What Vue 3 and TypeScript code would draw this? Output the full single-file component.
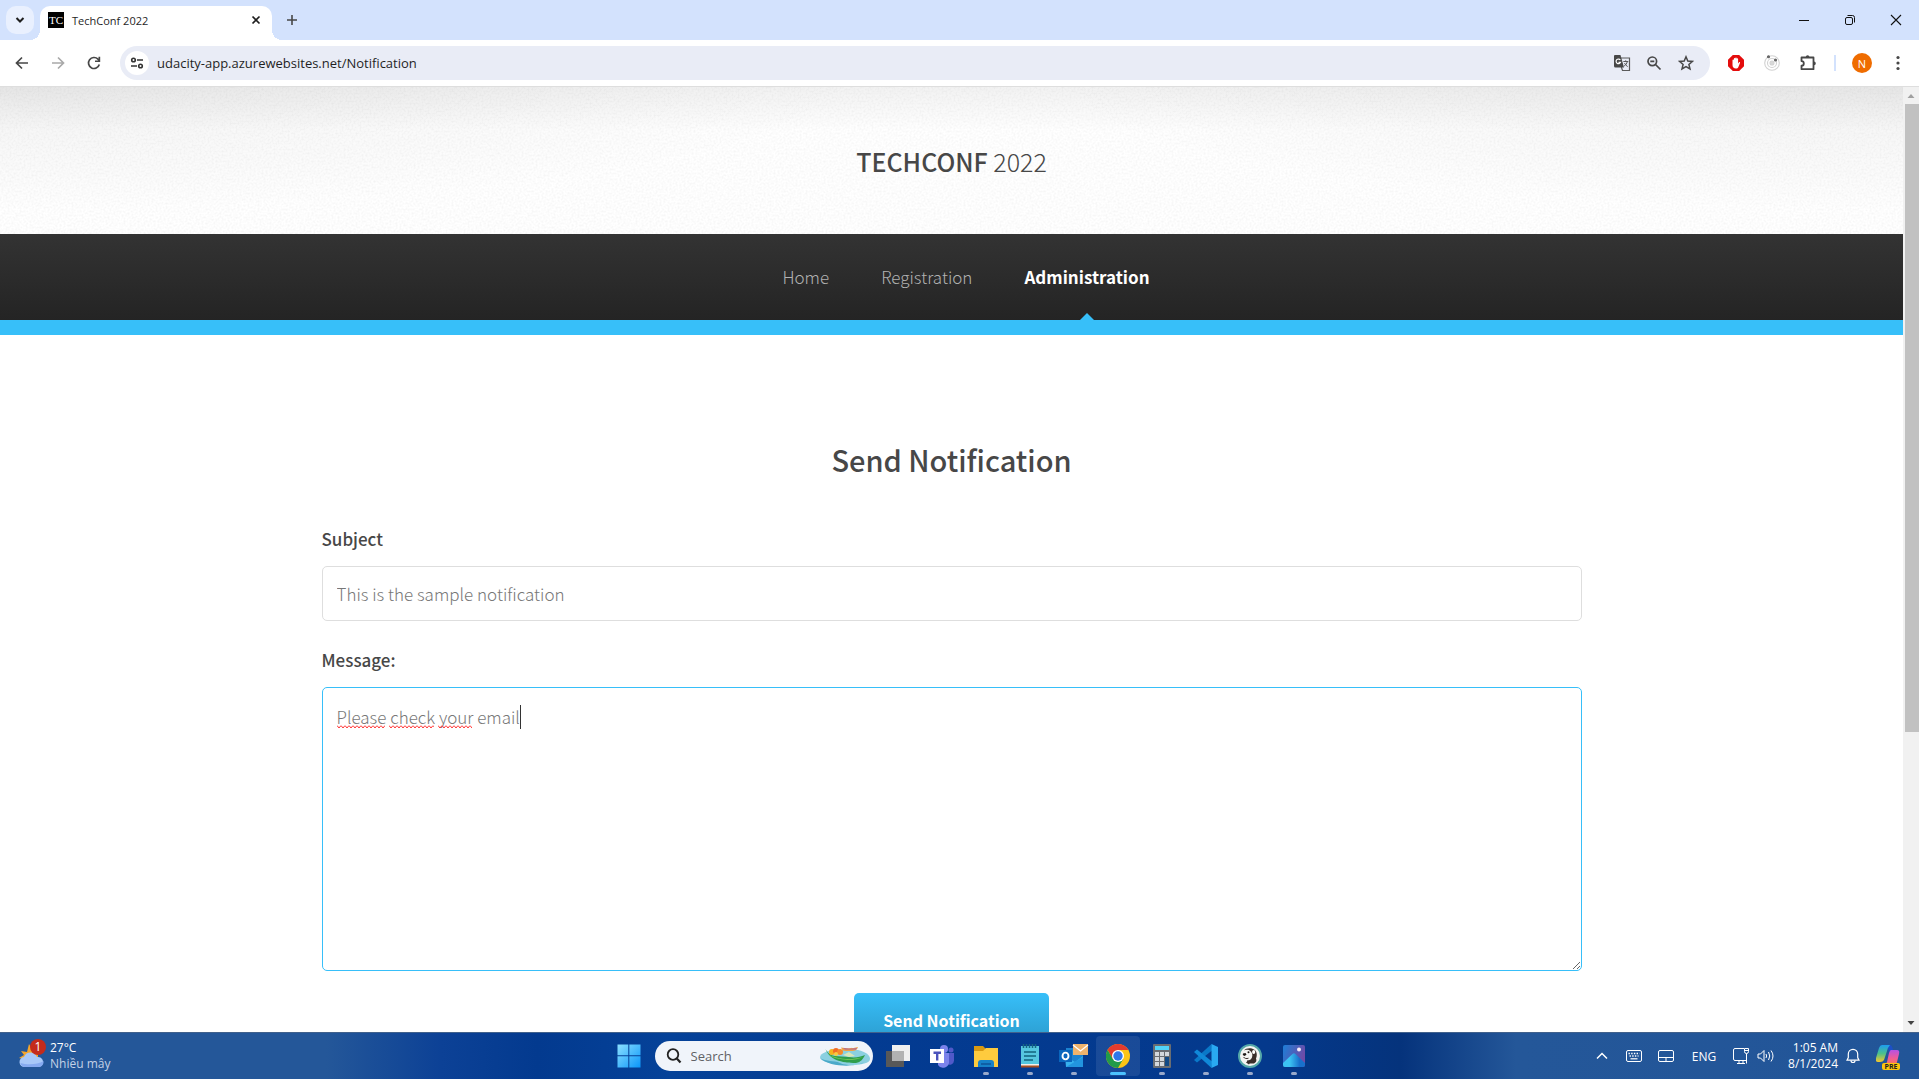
<script setup lang="ts">
import { ref } from 'vue'

interface NavItem {
  label: string
  active: boolean
}

const navItems: NavItem[] = [
  { label: 'Home', active: false },
  { label: 'Registration', active: false },
  { label: 'Administration', active: true },
]

const address = ref('udacity-app.azurewebsites.net/Notification')
const subject = ref('This is the sample notification')
const message = ref('Please check your email')
const search = ref('')

// Widths of the words that the spelling check underlines
const squiggles: number[] = [48, 45, 34]
</script>

<template>
  <div class="desktop">
    <header class="tabstrip">
      <button class="tab-search" aria-label="Search tabs">
        <svg width="10" height="10" viewBox="0 0 10 10"><path d="M1.5 3 5 6.500 8.500 3" fill="none" stroke="#1f1f1f" stroke-width="2" /></svg>
      </button>
      <div class="tab">
        <span class="favicon">TC</span>
        <span class="tab-title">TechConf 2022</span>
        <button class="plain tab-close" aria-label="Close tab">
          <svg width="10" height="10" viewBox="0 0 10 10"><path d="M1.500 1.500 8.500 8.500M8.500 1.500 1.500 8.500" stroke="#1f1f1f" stroke-width="1.700" /></svg>
        </button>
      </div>
      <button class="plain new-tab" aria-label="New tab">
        <svg width="12" height="12" viewBox="0 0 12 12"><path d="M6 1v10M1 6h10" stroke="#474747" stroke-width="1.600" /></svg>
      </button>
      <div class="window-buttons">
        <button class="plain" aria-label="Minimize">
          <svg width="12" height="12" viewBox="0 0 12 12"><path d="M1 6.500h10" stroke="#111" /></svg>
        </button>
        <button class="plain" aria-label="Restore">
          <svg width="12" height="12" viewBox="0 0 12 12" fill="none" stroke="#111"><rect x="1.500" y="3.500" width="7" height="7" rx="1.500" /><path d="M3.500 1.500H8.500a2 2 0 0 1 2 2V8.500" /></svg>
        </button>
        <button class="plain" aria-label="Close">
          <svg width="12" height="12" viewBox="0 0 12 12"><path d="M1 1 11 11M11 1 1 11" stroke="#111" stroke-width="1.100" /></svg>
        </button>
      </div>
    </header>

    <div class="toolbar">
      <button class="plain nav-button" aria-label="Back">
        <svg width="16" height="16" viewBox="0 0 16 16" fill="none" stroke="#474747" stroke-width="1.700"><path d="M14 8H3M8 2.500 2.500 8 8 13.500" /></svg>
      </button>
      <button class="plain nav-button" aria-label="Forward">
        <svg width="16" height="16" viewBox="0 0 16 16" fill="none" stroke="#a9a9a9" stroke-width="1.700"><path d="M2 8h11M8 2.500 13.500 8 8 13.500" /></svg>
      </button>
      <button class="plain nav-button" aria-label="Reload">
        <svg width="16" height="16" viewBox="0 0 16 16"><path d="M13.300 9.500A5.500 5.500 0 1 1 12 4.200L13.500 5.800" fill="none" stroke="#474747" stroke-width="1.700" /><path d="M14.200 1.800V7H9V5.400h3.500V1.800z" fill="#474747" /></svg>
      </button>
      <div class="omnibox">
        <button class="site-info" aria-label="Site information">
          <svg width="14" height="14" viewBox="0 0 14 14" fill="none" stroke="#333" stroke-width="1.600"><circle cx="3.500" cy="4" r="1.800" /><path d="M7 4h6M1 10h6" /><circle cx="10.500" cy="10" r="1.800" /></svg>
        </button>
        <input v-model="address" class="address" type="text" aria-label="Address" spellcheck="false" />
        <button class="plain omni-icon" aria-label="Translate">
          <svg width="18" height="18" viewBox="0 0 18 18"><path d="M8 4h8.500v12.500H9.500L8.300 13" fill="#e9ecf6" stroke="#5a5a5a" stroke-width="1.200" /><path d="M2 1H7.500L11 13.500H2.500A1.500 1.500 0 0 1 1 12V2a1 1 0 0 1 1-1z" fill="#474747" /><path d="M7.300 6A2.300 2.300 0 1 0 7.500 8.300H5.500" fill="none" stroke="#fff" stroke-width="1.200" /><path d="M10.300 7.500h5M12.700 6.300v1.200M14.300 7.500c-.5 2.200-1.500 3.500-3.200 4.500M11.500 9c.7 1.600 1.700 2.800 3.200 3.600" fill="none" stroke="#5a5a5a" /></svg>
        </button>
        <button class="plain omni-icon" aria-label="Zoom">
          <svg width="16" height="16" viewBox="0 0 16 16" fill="none" stroke="#474747" stroke-width="1.700"><circle cx="6.300" cy="6.300" r="4.300" /><path d="M9.500 9.500 14.500 14.500M4.300 6.300h4" /></svg>
        </button>
        <button class="plain omni-icon" aria-label="Bookmark">
          <svg width="16" height="16" viewBox="0 0 16 16"><path d="M8 1.800 9.800 6l4.600.4-3.500 3 1.100 4.500L8 11.500l-4 2.400 1.100-4.500-3.500-3L6.200 6z" fill="none" stroke="#474747" stroke-width="1.500" /></svg>
        </button>
      </div>
      <button class="plain ext" aria-label="Ad blocker">
        <svg width="16" height="16" viewBox="0 0 16 16"><path d="M4.800 0h6.400L16 4.800v6.400L11.200 16H4.800L0 11.200V4.800z" fill="#e40d0d" /><path d="M4.500 8.500V5.300a.7.7 0 0 1 1.400 0V3.800a.7.7 0 0 1 1.400 0V3.100a.7.7 0 0 1 1.400 0v.8a.7.7 0 0 1 1.400 0V8.600l.8-1.200c.5-.6 1.400-.2 1.100.5l-1.600 4c-.5 1.100-1.200 1.600-2.600 1.600-2 0-3.300-1.400-3.300-3.500z" fill="#fff" /></svg>
      </button>
      <button class="plain ext" aria-label="Extension">
        <svg width="16" height="16" viewBox="0 0 16 16" fill="none" stroke="#d2d2d2" stroke-width="1.100"><circle cx="8" cy="8" r="7.300" /><circle cx="8" cy="8" r="4.500" /><circle cx="8" cy="8" r="2" fill="#d8d8d8" /><circle cx="4.500" cy="1.800" r="1" fill="#666" stroke="#666" /><circle cx="11.500" cy="5" r="1" fill="#666" stroke="#666" /></svg>
      </button>
      <button class="plain ext" aria-label="Extensions">
        <svg width="18" height="18" viewBox="0 0 18 18"><path d="M2.500 3.500h12v11.700h-12v-3.500a2.300 2.300 0 0 0 0-4.600z" fill="none" stroke="#474747" stroke-width="1.800" stroke-linejoin="round" /><path d="M6.800 3a1.800 1.800 0 0 1 3.600 0zM15 7.600a1.800 1.800 0 0 1 0 3.600z" fill="#474747" /></svg>
      </button>
      <span class="divider"></span>
      <button class="avatar" aria-label="Profile">N</button>
      <button class="plain menu" aria-label="Menu">
        <svg width="4" height="16" viewBox="0 0 4 16" fill="#474747"><circle cx="2" cy="2.500" r="1.600" /><circle cx="2" cy="8" r="1.600" /><circle cx="2" cy="13.500" r="1.600" /></svg>
      </button>
    </div>

    <div class="viewport">
      <div class="page">
        <div class="banner">
          <svg class="grain" width="100%" height="100%" aria-hidden="true">
            <filter id="paper" x="0" y="0" width="100%" height="100%">
              <feTurbulence type="fractalNoise" baseFrequency="0.5" numOctaves="2" />
              <feColorMatrix values="0 0 0 0 0  0 0 0 0 0  0 0 0 0 0  0.08 0 0 0 -0.03" />
            </filter>
            <rect width="100%" height="100%" filter="url(#paper)" />
          </svg>
          <h1 class="logo"><strong>TECHCONF</strong> 2022</h1>
        </div>
        <nav class="site-nav">
          <a v-for="item in navItems" :key="item.label" href="#" :class="{ active: item.active }">{{ item.label }}</a>
        </nav>
        <main class="content">
          <h2>Send Notification</h2>
          <form @submit.prevent>
            <label for="subject">Subject</label>
            <input id="subject" v-model="subject" type="text" />
            <label for="message">Message:</label>
            <div class="message-box">
              <textarea id="message" v-model="message"></textarea>
              <div class="marks" aria-hidden="true">
                <svg v-for="(w, i) in squiggles" :key="i" :width="w" height="4">
                  <pattern :id="'wave' + i" width="4" height="4" patternUnits="userSpaceOnUse">
                    <path d="M0 .5 2 3 4 .5" fill="none" stroke="#f33" stroke-width="1" />
                  </pattern>
                  <rect width="100%" height="4" :fill="`url(#wave${i})`" />
                </svg>
                <span class="caret"></span>
              </div>
            </div>
            <button class="submit" type="submit">Send Notification</button>
          </form>
        </main>
      </div>
      <div class="scrollbar" aria-hidden="true">
        <svg width="8" height="17" viewBox="0 0 8 17"><path d="M.5 11 4 7l3.500 4z" fill="#a0a0a0" /></svg>
        <span class="track"><span class="thumb"></span></span>
        <svg width="8" height="18" viewBox="0 0 8 18"><path d="M.5 7 4 11l3.500-4z" fill="#444" /></svg>
      </div>
    </div>

    <footer class="taskbar">
      <div class="weather">
        <span class="weather-icon">
          <svg width="26" height="26" viewBox="0 0 26 26">
            <path d="M0 15l5-3-3-4 6 1 2-8 3 5 6-2v12H5z" fill="#f5a52a" />
            <path d="M6 24a5 5 0 0 1-1-10 7 7 0 0 1 13 0 5 5 0 0 1 2 10z" fill="#a8c8f8" />
            <path d="M6 24a5 5 0 0 1-4.500-4c6 2 17 2 23-2a5 5 0 0 1-4.500 6z" fill="#86aaf0" />
          </svg>
          <span class="badge">1</span>
        </span>
        <span class="weather-text"><span>27°C</span><span class="dim">Nhiều mây</span></span>
      </div>

      <div class="apps">
        <button class="app" aria-label="Start">
          <svg width="24" height="24" viewBox="0 0 24 24">
            <defs><linearGradient id="win" x1="0" y1="0" x2="1" y2="1"><stop offset="0" stop-color="#8be0ff" /><stop offset="1" stop-color="#0a96fa" /></linearGradient></defs>
            <path d="M.5.500H11.300V11.300H.5zM12.300.500H23.500V11.300H12.300zM.5 12.300H11.300V23.500H.5zM12.300 12.300H23.500V23.500H12.300z" fill="url(#win)" />
          </svg>
        </button>
        <label class="search">
          <svg width="16" height="16" viewBox="0 0 16 16" fill="none" stroke="#222" stroke-width="1.800"><circle cx="7" cy="6.500" r="5.300" /><path d="M10.800 10.500 14.500 14.500" stroke-width="2.200" /></svg>
          <input v-model="search" type="text" placeholder="Search" />
          <svg width="50" height="20" viewBox="0 0 50 20">
            <path d="M0 11c1-4 7-6 14-7h24c8 2 12 5 12 9 0 4-8 6-22 6S0 16 0 11z" fill="#8bd0e0" />
            <path d="M0 12c6 4 14 2 20 5s20 3 24-1c-6 5-34 6-44-4z" fill="#4ba9c9" />
            <path d="M21 1.500c5 1 12 1 17-.5-1 3-3 4-6 4h-6c-3 0-4-1-5-3.500z" fill="#f0a040" />
            <path d="M23 2c5 1 10 1 14 0l-1 1.500H25z" fill="#a65fae" />
            <path d="M5 1c1 4 4 8 10 9l14 1c6 1 11 0 16-2-2 4-4 7-9 8-14 0-28-3-31-16z" fill="#2f9e4c" />
            <path d="M8 8c8 5 22 7 35 3-4 2-9 3-15 3C20 13 12 12 8 8z" fill="#7ed058" />
            <circle cx="12" cy="6" r="3" fill="#f5b21e" /><circle cx="16" cy="5" r="3" fill="#f06c28" /><circle cx="20" cy="6" r="3" fill="#f58a2a" /><circle cx="16" cy="8" r="2" fill="#f7cb3d" />
            <path d="M23 9l6-3 6 4-6 1z" fill="#d8e6b8" />
          </svg>
        </label>
        <button class="app" aria-label="Task view">
          <svg width="24" height="22" viewBox="0 0 24 22"><path d="M0 6h18v16H0z" fill="#585858" /><path d="M6 0h18v16H6z" fill="#efefef" /><path d="M6 6h12v10H6z" fill="#b2b2b2" /></svg>
        </button>
        <button class="app" aria-label="Teams">
          <svg width="24" height="24" viewBox="0 0 24 24"><circle cx="14" cy="5" r="4" fill="#7b83eb" /><circle cx="21" cy="6" r="2.500" fill="#5059c9" /><path d="M16 9h8v7a4.500 4.500 0 0 1-7 4z" fill="#5059c9" /><path d="M8 9h11v8a6 6 0 0 1-11 4z" fill="#7b83eb" /><path d="M0 5h14v14H0z" fill="#fff" /><path d="M3.500 8.800h7.500M7.200 8.500v8" stroke="#4b53bc" stroke-width="2.400" /></svg>
        </button>
        <button class="app running" aria-label="File Explorer">
          <svg width="24" height="24" viewBox="0 0 24 24"><path d="M0 2h9l3 3H24V10H0z" fill="#d99a12" /><path d="M0 7h9l3-3H24V23H0z" fill="#fecb3e" /><path d="M4 23v-4a3 3 0 0 1 3-3H17a3 3 0 0 1 3 3v4z" fill="#1681c9" /><path d="M7 19h10v2H7z" fill="#0f5fa5" /></svg>
        </button>
        <button class="app running" aria-label="Notepad">
          <svg width="20" height="24" viewBox="0 0 20 24"><path d="M1 20h18v3.500H1z" fill="#a84d20" /><path d="M1 19h18v2.500H1z" fill="#f3eee8" /><path d="M1 2h18v18H1z" fill="#55c6df" /><path d="M4 8h12M4 12h12M4 16h9" stroke="#12637e" stroke-width="1.500" /><path d="M3.500 0v4M6.500 0v4M9.500 0v4M12.500 0v4M15.500 0v4" stroke="#176581" stroke-width="1.500" /></svg>
        </button>
        <button class="app running" aria-label="Outlook">
          <svg width="30" height="24" viewBox="0 0 30 24"><path d="M7 4h17v18H7z" fill="#1b82d0" /><path d="M6 12l10 6 8-6v11H7z" fill="#36b1ed" /><path d="M7 23 24 13v10z" fill="#2295df" /><path d="M0 6h13v12H0z" fill="#0a66bd" /><ellipse cx="6.500" cy="12" rx="3" ry="3.400" fill="none" stroke="#fff" stroke-width="1.900" /><path d="M14 0h15v11H14z" fill="#efb36c" /><path d="M14 1l7.500 6L29 1" fill="none" stroke="#fff" stroke-width="1.300" /></svg>
        </button>
        <button class="app running current" aria-label="Chrome">
          <svg width="24" height="24" viewBox="0 0 24 24"><circle cx="12" cy="12" r="12" fill="#fbc516" /><path d="M12 6H22.400A12 12 0 0 0 1.600 6L6.800 15z" fill="#e33b2e" /><path d="M1.600 6a12 12 0 0 0 10.400 18L17.200 15H6.800z" fill="#229b49" /><circle cx="12" cy="12" r="6" fill="#fff" /><circle cx="12" cy="12" r="4.700" fill="#2f78ea" /></svg>
        </button>
        <button class="app running" aria-label="Calculator">
          <svg width="18" height="24" viewBox="0 0 18 24"><rect width="18" height="24" rx="1" fill="#6a6d72" /><path d="M2 2h14v4H2z" fill="#51d4fa" /><path d="M2 8h4v4H2zM7 8h4v4H7zM12 8h4v4h-4zM2 13h4v4H2zM7 13h4v4H7zM2 18h4v4H2zM7 18h4v4H7z" fill="#d4d8dc" /><path d="M12 13h4v9h-4z" fill="#124a86" /></svg>
        </button>
        <button class="app running" aria-label="Visual Studio Code">
          <svg width="24" height="24" viewBox="0 0 24 24"><path d="M17.500 0 18 6.500 3 18.500 0 16z" fill="#0a78c8" /><path d="M17.500 24 18 17.500 3 5.500 0 8z" fill="#1088d8" /><path d="M17.500 0 24 3V21l-6.500 3z" fill="#29a9f2" /></svg>
        </button>
        <button class="app running" aria-label="DBeaver">
          <svg width="24" height="24" viewBox="0 0 24 24"><circle cx="12" cy="12" r="11" fill="#f4f4f2" stroke="#54a7a8" stroke-width="2" /><path d="M6 6.500C8 4 13 3.500 16 5.500c3 1.500 3.500 6 2 9 1 2 0 4-2 5h-5c-1-1-2-2-2-3 3 0 4-1 5-3 1-3 0-6-3-7.500C9 5.300 7 6 6 6.500z" fill="#3a2e2a" /><path d="M8 18.500l2-2 2 2-1 2z" fill="#3a2e2a" /><ellipse cx="15.700" cy="8" rx="1.600" ry="2" fill="#fff" /><path d="M5 9.500 7.500 9l1 1.800-2 1.200-1.700-1z" fill="#1c1715" /><circle cx="10.500" cy="8.300" r="1" fill="#1c1715" /><path d="M5.500 13c1 1.500 3 2 5 1.200" fill="none" stroke="#3a2e2a" /></svg>
        </button>
        <button class="app running" aria-label="Photos">
          <svg width="22" height="22" viewBox="0 0 22 22">
            <defs>
              <linearGradient id="sky" x1="0" y1="0" x2="1" y2="0.4"><stop offset="0" stop-color="#1c7fd8" /><stop offset="1" stop-color="#6f4aa6" /></linearGradient>
              <linearGradient id="hill" x1="0" y1="1" x2="1" y2="1"><stop offset=".3" stop-color="#3cc4f2" /><stop offset=".75" stop-color="#1870cc" /></linearGradient>
            </defs>
            <rect width="22" height="22" rx="2" fill="url(#sky)" /><path d="M0 18 9.500 9q1.500-1.500 3 0L22 18v2a2 2 0 0 1-2 2H2a2 2 0 0 1-2-2z" fill="url(#hill)" /><circle cx="16" cy="4.500" r="2" fill="#f4eaf8" />
          </svg>
        </button>
      </div>

      <div class="tray">
        <button class="tray-icon" aria-label="Show hidden icons">
          <svg width="12" height="8" viewBox="0 0 12 8"><path d="M1 6.500 6 1.500l5 5" fill="none" stroke="#fff" stroke-width="1.500" /></svg>
        </button>
        <button class="tray-icon" aria-label="Touch keyboard">
          <svg width="16" height="12" viewBox="0 0 16 12"><rect x=".5" y=".5" width="15" height="11" rx="1.500" fill="none" stroke="#fff" /><path d="M2.500 3.500h11M3.500 6h9" stroke="#fff" stroke-width="1.400" stroke-dasharray="1.400 1.300" /><path d="M4.500 8.800h7" stroke="#fff" stroke-width="1.200" /></svg>
        </button>
        <button class="tray-icon" aria-label="Touchpad">
          <svg width="16" height="12" viewBox="0 0 16 12"><path d="M.5 7.500h15M8 7.500v4" stroke="#fff" /><rect x=".5" y=".5" width="15" height="11" rx="1.500" fill="none" stroke="#fff" /></svg>
        </button>
        <button class="tray-icon lang">ENG</button>
        <button class="tray-icon status" aria-label="Network and volume">
          <svg width="17" height="18" viewBox="0 0 17 18" fill="none" stroke="#fff"><path d="M11 1.500H2A1.500 1.500 0 0 0 .5 3v9A1.500 1.500 0 0 0 2 13.500h11M4 16.500h8M6 13.500v3M10 13.500v3" /><path d="M11.500 1.500h4v3a2 2 0 0 1-4 0zM13.500 6.500V16.500M11.500 3.500h4" /></svg>
          <svg width="18" height="14" viewBox="0 0 18 14" fill="none" stroke="#fff"><path d="M1 5h2.500L7 1.500v11L3.500 9H1z" /><path d="M9 5q1.200 2 0 4M11.500 3q2.500 4 0 8M14 1.500q4 5.500 0 11" /></svg>
        </button>
        <div class="clock"><span>1:05 AM</span><span>8/1/2024</span></div>
        <button class="tray-icon bell" aria-label="Notifications">
          <svg width="14" height="16" viewBox="0 0 14 16" fill="none" stroke="#fff" stroke-width="1.200"><path d="M1 12.200 2.300 9.500V6a4.700 4.700 0 0 1 9.400 0V9.500L13 12.200z" /><path d="M5 12.500a2 2 0 0 0 4 0" /></svg>
        </button>
        <button class="tray-icon copilot" aria-label="Copilot">
          <svg width="24" height="24" viewBox="0 0 24 24">
            <defs>
              <linearGradient id="cpa" x1="0" y1="0" x2="0" y2="1"><stop offset="0" stop-color="#1d9df0" /><stop offset=".5" stop-color="#4bc08c" /><stop offset="1" stop-color="#f6c62b" /></linearGradient>
              <linearGradient id="cpb" x1="0" y1="0" x2="0" y2="1"><stop offset="0" stop-color="#b452e4" /><stop offset=".5" stop-color="#ee5b98" /><stop offset="1" stop-color="#f9814d" /></linearGradient>
            </defs>
            <path d="M11 1h3q2 0 3 5l-4 2z" fill="#1c50c8" />
            <path d="M6 1h8q-2 2-3 6l-3 9q-1 2-4 2H2q-3 0-2-4L3 4q1-3 3-3z" fill="url(#cpa)" />
            <path d="M15 6h6q3 0 2 4l-2 8q-1 4-4 4H8q2-1 3-4l2-9q1-3 2-3z" fill="url(#cpb)" />
          </svg>
          <span class="pre">PRE</span>
        </button>
      </div>
    </footer>
  </div>
</template>

<style>
body {
  overflow: hidden;
}
</style>

<style scoped>
* {
  box-sizing: border-box;
}
svg {
  display: block;
  flex: none;
}
button,
input,
textarea {
  font: inherit;
  color: inherit;
  border: 0;
  padding: 0;
  margin: 0;
  background: none;
  outline: none;
}
.desktop {
  display: flex;
  flex-direction: column;
  height: 100vh;
  overflow: hidden;
  background: #fff;
  font-family: "Open Sans", "Noto Sans", sans-serif;
  font-size: 12px;
  color: #1f1f1f;
}
.plain {
  display: flex;
  align-items: center;
  justify-content: center;
}

/* Browser tab strip */
.tabstrip {
  display: flex;
  flex: none;
  height: 40px;
  padding: 6px 0 0 6px;
  background: #d3e2fd;
}
.tab-search {
  display: flex;
  align-items: center;
  justify-content: center;
  width: 28px;
  height: 28px;
  margin-right: 6px;
  border-radius: 10px;
  background: #e9f0fe;
}
.tab {
  position: relative;
  display: flex;
  align-items: center;
  width: 232px;
  height: 34px;
  padding: 0 10px 6px 8px;
  border-radius: 10px 10px 0 0;
  background: #fff;
}
.tab::before,
.tab::after {
  content: "";
  position: absolute;
  bottom: 0;
  width: 10px;
  height: 10px;
}
.tab::before {
  left: -10px;
  background: radial-gradient(circle at 0 0, transparent 10px, #fff 10px);
}
.tab::after {
  right: -10px;
  background: radial-gradient(circle at 100% 0, transparent 10px, #fff 10px);
}
.favicon {
  width: 16px;
  height: 16px;
  background: #000;
  color: #fff;
  font: 11px/16px "Liberation Serif", serif;
  text-align: center;
}
.tab-title {
  flex: 1;
  margin-left: 8px;
  font-size: 11px;
}
.tab-close {
  width: 12px;
  height: 16px;
}
.new-tab {
  width: 40px;
  height: 28px;
}
.window-buttons {
  display: flex;
  margin-left: auto;
}
.window-buttons button {
  width: 46px;
  height: 28px;
}

/* Browser toolbar */
.toolbar {
  display: flex;
  flex: none;
  align-items: center;
  height: 47px;
  padding: 0 11px 0 4px;
  border-bottom: 1px solid #dedede;
  background: #fff;
}
.nav-button,
.ext {
  width: 36px;
  height: 36px;
}
.omnibox {
  display: flex;
  flex: 1;
  align-items: center;
  height: 34px;
  margin: 0 8px;
  padding: 0 8px 0 5px;
  border-radius: 17px;
  background: #e9ecf6;
}
.site-info {
  display: flex;
  align-items: center;
  justify-content: center;
  width: 24px;
  height: 24px;
  border-radius: 12px;
  background: #fff;
}
.address {
  flex: 1;
  min-width: 0;
  margin-left: 8px;
  font-size: 13px;
}
.omni-icon {
  width: 32px;
  height: 32px;
}
.divider {
  width: 2px;
  height: 16px;
  margin: 0 16px 0 8px;
  background: #d3e2fd;
}
.avatar {
  width: 20px;
  height: 20px;
  border-radius: 10px;
  background: #ef6c00;
  color: #fff;
  font-size: 11px;
}
.menu {
  width: 20px;
  height: 32px;
  margin-left: 16px;
}

/* Web page */
.viewport {
  display: flex;
  flex: 1;
  min-height: 0;
}
.page {
  flex: 1;
  overflow: hidden;
  font-family: "Source Sans Pro", "Noto Sans CJK SC", sans-serif;
  font-weight: 300;
  font-size: 17px;
  color: #474747;
}
.banner {
  position: relative;
  padding: 54px 0 53px;
  background:
    radial-gradient(ellipse 45% 85% at 0 0, rgba(0, 0, 0, 0.05), transparent),
    radial-gradient(ellipse 45% 85% at 100% 0, rgba(0, 0, 0, 0.05), transparent),
    linear-gradient(rgba(0, 0, 0, 0.05), transparent 30%),
    #fff;
}
.grain {
  position: absolute;
  inset: 0;
}
.logo {
  position: relative;
  margin: 0;
  font-size: 25px;
  line-height: 40px;
  font-weight: 300;
  text-align: center;
}
.logo strong {
  font-weight: 500;
}
.site-nav {
  display: flex;
  justify-content: center;
  gap: 52px;
  padding-left: 29px;
  border-bottom: 15px solid #37bff9;
  background: linear-gradient(#333, #242424);
}
.site-nav a {
  position: relative;
  line-height: 86px;
  color: #b2b2b2;
  text-decoration: none;
}
.site-nav a.active {
  color: #fff;
  font-weight: 700;
}
.site-nav a.active::after {
  content: "";
  position: absolute;
  bottom: 0;
  left: 50%;
  margin-left: -7px;
  border: 7px solid transparent;
  border-top: 0;
  border-bottom-color: #37bff9;
}
.content {
  max-width: 1260px;
  margin: 0 auto;
  padding-top: 102px;
}
h2 {
  margin: 0 0 44px;
  font-size: 29px;
  line-height: 44px;
  font-weight: 500;
  text-align: center;
}
form {
  display: flex;
  flex-direction: column;
}
label[for] {
  margin-bottom: 13px;
  line-height: 28px;
  font-weight: 500;
}
#subject {
  height: 55px;
  margin-bottom: 25px;
  padding: 0 14px;
  border: 1px solid #dedede;
  border-radius: 5px;
}
.message-box {
  position: relative;
  margin-bottom: 22px;
}
#subject,
textarea {
  color: #777;
}
textarea {
  display: block;
  width: 100%;
  height: 284px;
  padding: 15px 14px;
  border: 1px solid #37bff9;
  border-radius: 5px;
  line-height: 28px;
  resize: vertical;
}
.marks {
  position: absolute;
  top: 18px;
  left: 15px;
  display: flex;
  align-items: flex-end;
  gap: 4px;
  pointer-events: none;
}
.caret {
  width: 1px;
  height: 24px;
  margin-left: 44px;
  background: #333;
}
.submit {
  align-self: center;
  height: 54px;
  padding: 0 29px;
  border-radius: 5px;
  background: linear-gradient(#37bff9, #2a98c9);
  color: #fff;
  font-size: 16px;
  font-weight: 700;
}
.scrollbar {
  display: flex;
  flex-direction: column;
  align-items: center;
  width: 16px;
  background: #f1f1f1;
}
.track {
  flex: 1;
  width: 14px;
  margin-left: 2px;
}
.thumb {
  display: block;
  height: 69%;
  background: #c1c1c1;
}

/* Windows taskbar */
.taskbar {
  display: grid;
  grid-template-columns: 1fr auto 1fr;
  flex: none;
  align-items: center;
  height: 47px;
  border-top: 1px solid #41618c;
  background: linear-gradient(90deg, #245799 0, #245799 17%, #0c4196 23%, #033a8f 28%, #054299 35%, #033b92 44%, #04398c 66%, #05337c 73%, #245799 79%, #225598 100%);
  color: #fff;
}
.weather {
  display: flex;
  align-items: center;
  gap: 5px;
  padding-left: 19px;
}
.weather-icon {
  position: relative;
}
.badge {
  position: absolute;
  top: -4px;
  left: 11px;
  width: 16px;
  height: 16px;
  border-radius: 8px;
  background: #c42b1c;
  line-height: 16px;
  text-align: center;
}
.weather-text,
.clock {
  display: flex;
  flex-direction: column;
  line-height: 16px;
}
.dim {
  color: #c3d2e6;
}
.apps {
  display: flex;
  align-items: center;
  padding-left: 3px;
}
.app {
  position: relative;
  display: flex;
  align-items: center;
  justify-content: center;
  width: 44px;
  height: 40px;
}
.running::after {
  content: "";
  position: absolute;
  bottom: 1px;
  left: 19px;
  width: 6px;
  height: 3px;
  border-radius: 2px;
  background: #98a9cb;
}
.current {
  border-radius: 4px;
  background: rgba(255, 255, 255, 0.09);
}
.current::after {
  left: 14px;
  width: 16px;
  background: #4cc2ff;
}
.search {
  display: flex;
  align-items: center;
  width: 218px;
  height: 30px;
  margin: 0 3px 0 4px;
  padding: 0 3px 0 11px;
  border-radius: 15px;
  background: #f0f4fa;
}
.search input {
  flex: 1;
  min-width: 0;
  margin-left: 9px;
  font-size: 13px;
}
.search input::placeholder {
  color: #5f6165;
  opacity: 1;
}
.tray {
  display: flex;
  align-items: center;
  justify-content: flex-end;
  padding-right: 19px;
}
.tray-icon {
  display: flex;
  align-items: center;
  justify-content: center;
  width: 32px;
  height: 40px;
}
.lang {
  width: 44px;
}
.status {
  gap: 7px;
  width: 56px;
}
.clock {
  margin-left: 6px;
  text-align: right;
}
.bell {
  width: 30px;
}
.copilot {
  position: relative;
  width: 24px;
  margin-left: 8px;
}
.pre {
  position: absolute;
  bottom: 6px;
  left: 6px;
  width: 18px;
  border-radius: 2px;
  background: #fdc70c;
  color: #222;
  font-size: 7px;
  line-height: 7px;
  font-weight: 700;
  text-align: center;
}
</style>
